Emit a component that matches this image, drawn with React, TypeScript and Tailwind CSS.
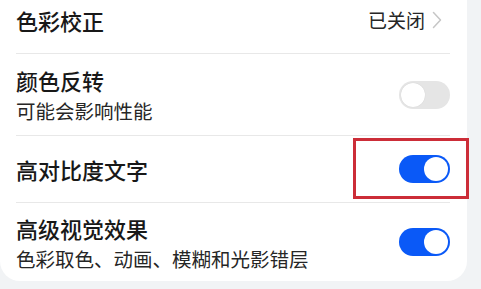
type Row = {
  title: string;
  sub?: string;
  kind: "link" | "on" | "off";
  value?: string;
  h: string;
};

const ROWS: Row[] = [
  { title: "色彩校正", kind: "link", value: "已关闭", h: "h-[67px]" },
  { title: "颜色反转", sub: "可能会影响性能", kind: "off", h: "h-[82px]" },
  { title: "高对比度文字", kind: "on", h: "h-[67px]" },
  { title: "高级视觉效果", sub: "色彩取色、动画、模糊和光影错层", kind: "on", h: "h-[78px]" },
];

function Toggle({ on }: { on: boolean }) {
  return (
    <div
      className={`flex h-[28px] w-[51px] items-center rounded-full p-[2px] ${
        on ? "justify-end bg-[#0a59f7]" : "justify-start bg-[#e5e5e5]"
      }`}
    >
      <div
        className={`h-[24px] w-[24px] rounded-full bg-white ${
          on ? "" : "shadow-[0_0_1px_rgba(0,0,0,0.15)]"
        }`}
      />
    </div>
  );
}

export default function App() {
  return (
    <div
      className="relative h-[289px] w-[481px] overflow-hidden bg-[#f1f3f5]"
      style={{ fontFamily: '"Noto Sans CJK SC", "Noto Sans", sans-serif' }}
    >
      <div className="-mt-[13px] w-[467px] rounded-b-[20px] bg-white pl-4 pr-[17px]">
        {ROWS.map((r, i) => (
          <div
            key={r.title}
            className={`flex items-center justify-between ${r.h} ${
              i < ROWS.length - 1 ? "border-b border-[#e8e8e8]" : ""
            }`}
          >
            <div className="flex flex-col">
              <span className="text-[22px] font-medium leading-[30px] text-[#181818]">
                {r.title}
              </span>
              {r.sub && (
                <span className="mt-[3px] text-[19.5px] leading-[26px] text-[#262626]">
                  {r.sub}
                </span>
              )}
            </div>
            {r.kind === "link" ? (
              <div className="flex items-center">
                <span className="text-[19px] text-[#262626]">{r.value}</span>
                <svg
                  className="ml-[7px] mr-[8px]"
                  width="10"
                  height="18"
                  viewBox="0 0 10 18"
                  fill="none"
                  stroke="#c6c6c6"
                  strokeWidth="1.5"
                  strokeLinecap="round"
                  strokeLinejoin="round"
                >
                  <path d="M1.5 1.5 L8.5 9 L1.5 16.5" />
                </svg>
              </div>
            ) : (
              <Toggle on={r.kind === "on"} />
            )}
          </div>
        ))}
      </div>
      <div className="absolute left-[353px] top-[138px] h-[61px] w-[116px] border-[3px] border-[#cc2d38]" />
    </div>
  );
}
